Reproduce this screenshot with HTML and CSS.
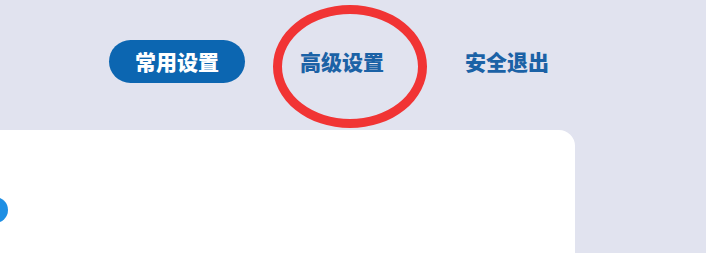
FILE: index.html
```html
<!DOCTYPE html>
<html lang="zh-CN">
<head>
<meta charset="utf-8">
<title>设置</title>
<link rel="stylesheet" href="styles.css">
</head>
<body>
<div class="page">
  <header class="topbar">
    <nav class="nav">
      <a class="nav-item active">常用设置</a>
      <a class="nav-item">高级设置</a>
      <a class="nav-item">安全退出</a>
    </nav>
    <div class="mark"></div>
  </header>
  <main class="card">
    <span class="dot"></span>
  </main>
</div>
</body>
</html>
```
FILE: styles.css
```css
html, body {
  margin: 0;
  padding: 0;
  background: #e1e3ef;
  overflow: hidden;
}
.page {
  width: 706px;
  height: 253px;
  overflow: hidden;
  font-family: "Noto Sans CJK SC", "Noto Sans", sans-serif;
}
.topbar {
  position: relative;
  height: 130px;
  box-sizing: border-box;
  padding-top: 40px;
}
.nav {
  display: flex;
  gap: 29px;
  padding-left: 109px;
}
.nav-item {
  display: flex;
  align-items: center;
  justify-content: center;
  height: 43px;
  padding: 0 26px;
  border-radius: 22px;
  font-size: 21px;
  font-weight: 900;
  color: #1b62a6;
  line-height: 1;
  white-space: nowrap;
}
.nav-item.active {
  background: #0c66b1;
  color: #ffffff;
}
.mark {
  position: absolute;
  left: 273px;
  top: 5px;
  width: 154px;
  height: 123px;
  box-sizing: border-box;
  border: 9px solid #f13434;
  border-radius: 50%;
}
.card {
  position: relative;
  width: 575px;
  height: 200px;
  background: #ffffff;
  border-top-right-radius: 16px;
}
.dot {
  position: absolute;
  left: -18px;
  top: 67px;
  width: 26px;
  height: 26px;
  border-radius: 50%;
  background: #1e8fe4;
}
```
